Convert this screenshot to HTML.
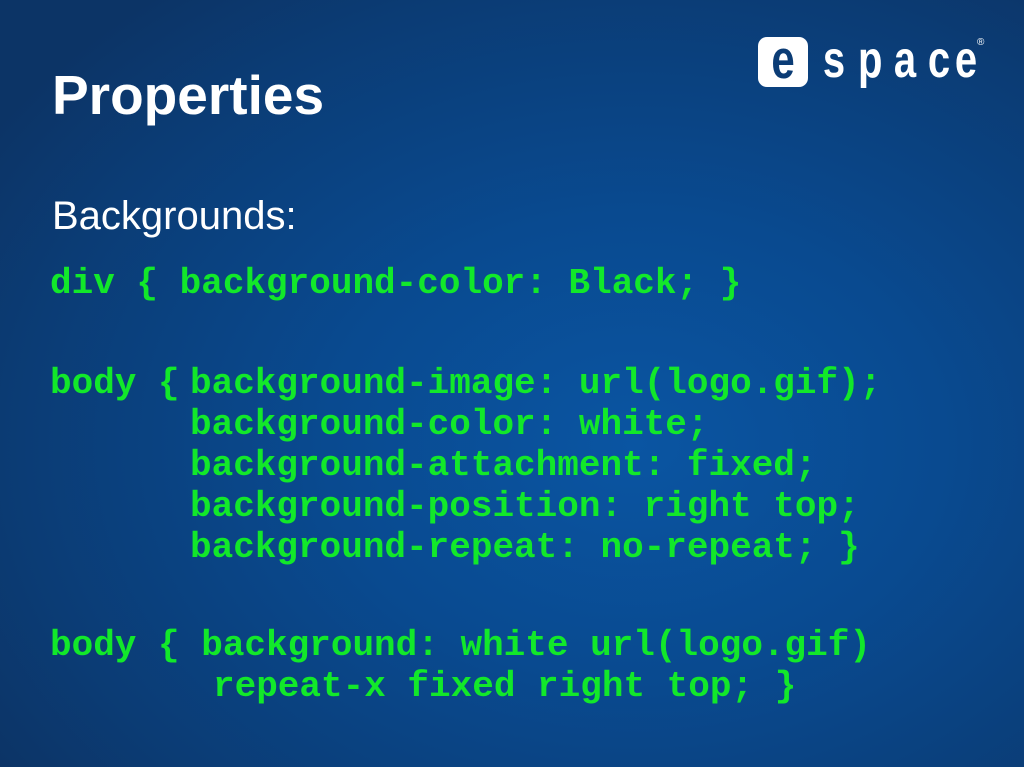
<!DOCTYPE html>
<html><head><style>
body{margin:0;width:1024px;height:767px;overflow:hidden;background:radial-gradient(ellipse 75% 75% at 62% 58%,#0a55a2 0%,#094a90 40%,#0b3c75 80%,#0c3466 100%);position:relative;font-family:"Liberation Sans",sans-serif}
.t{position:absolute;color:#fff}
.c{position:absolute;font-family:"Liberation Mono",monospace;font-weight:bold;font-size:36px;color:#12e82a;white-space:pre;line-height:41px}
.l{position:absolute;top:38px;font-weight:bold;font-size:40px;color:#fff;transform:scaleY(1.3);transform-origin:50% 50%;width:24px;text-align:center}
</style></head><body>
<div class="t" style="left:52px;top:63px;font-size:55px;font-weight:bold">Properties</div>
<div class="t" style="left:52px;top:194px;font-size:40px">Backgrounds:</div>
<div style="position:absolute;left:758px;top:37px;width:50px;height:50px;background:#fff;border-radius:9px"></div>
<div style="position:absolute;left:760px;top:36px;width:46px;font-weight:bold;font-size:42px;color:#0b3c75;text-align:center;transform:scaleY(1.3)">e</div>
<div class="l" style="left:822px">s</div>
<div class="l" style="left:858px">p</div>
<div class="l" style="left:893px">a</div>
<div class="l" style="left:927px">c</div>
<div class="l" style="left:954px">e</div>
<div style="position:absolute;left:977px;top:37px;font-size:10px;color:#fff">®</div>
<div class="c" style="left:50px;top:263px">div { background-color: Black; }</div>
<div class="c" style="left:50px;top:363px">body {</div>
<div class="c" style="left:190px;top:363px">background-image: url(logo.gif);
background-color: white;
background-attachment: fixed;
background-position: right top;
background-repeat: no-repeat; }</div>
<div class="c" style="left:50px;top:625px">body { background: white url(logo.gif)</div>
<div class="c" style="left:213px;top:666px">repeat-x fixed right top; }</div>
</body></html>
